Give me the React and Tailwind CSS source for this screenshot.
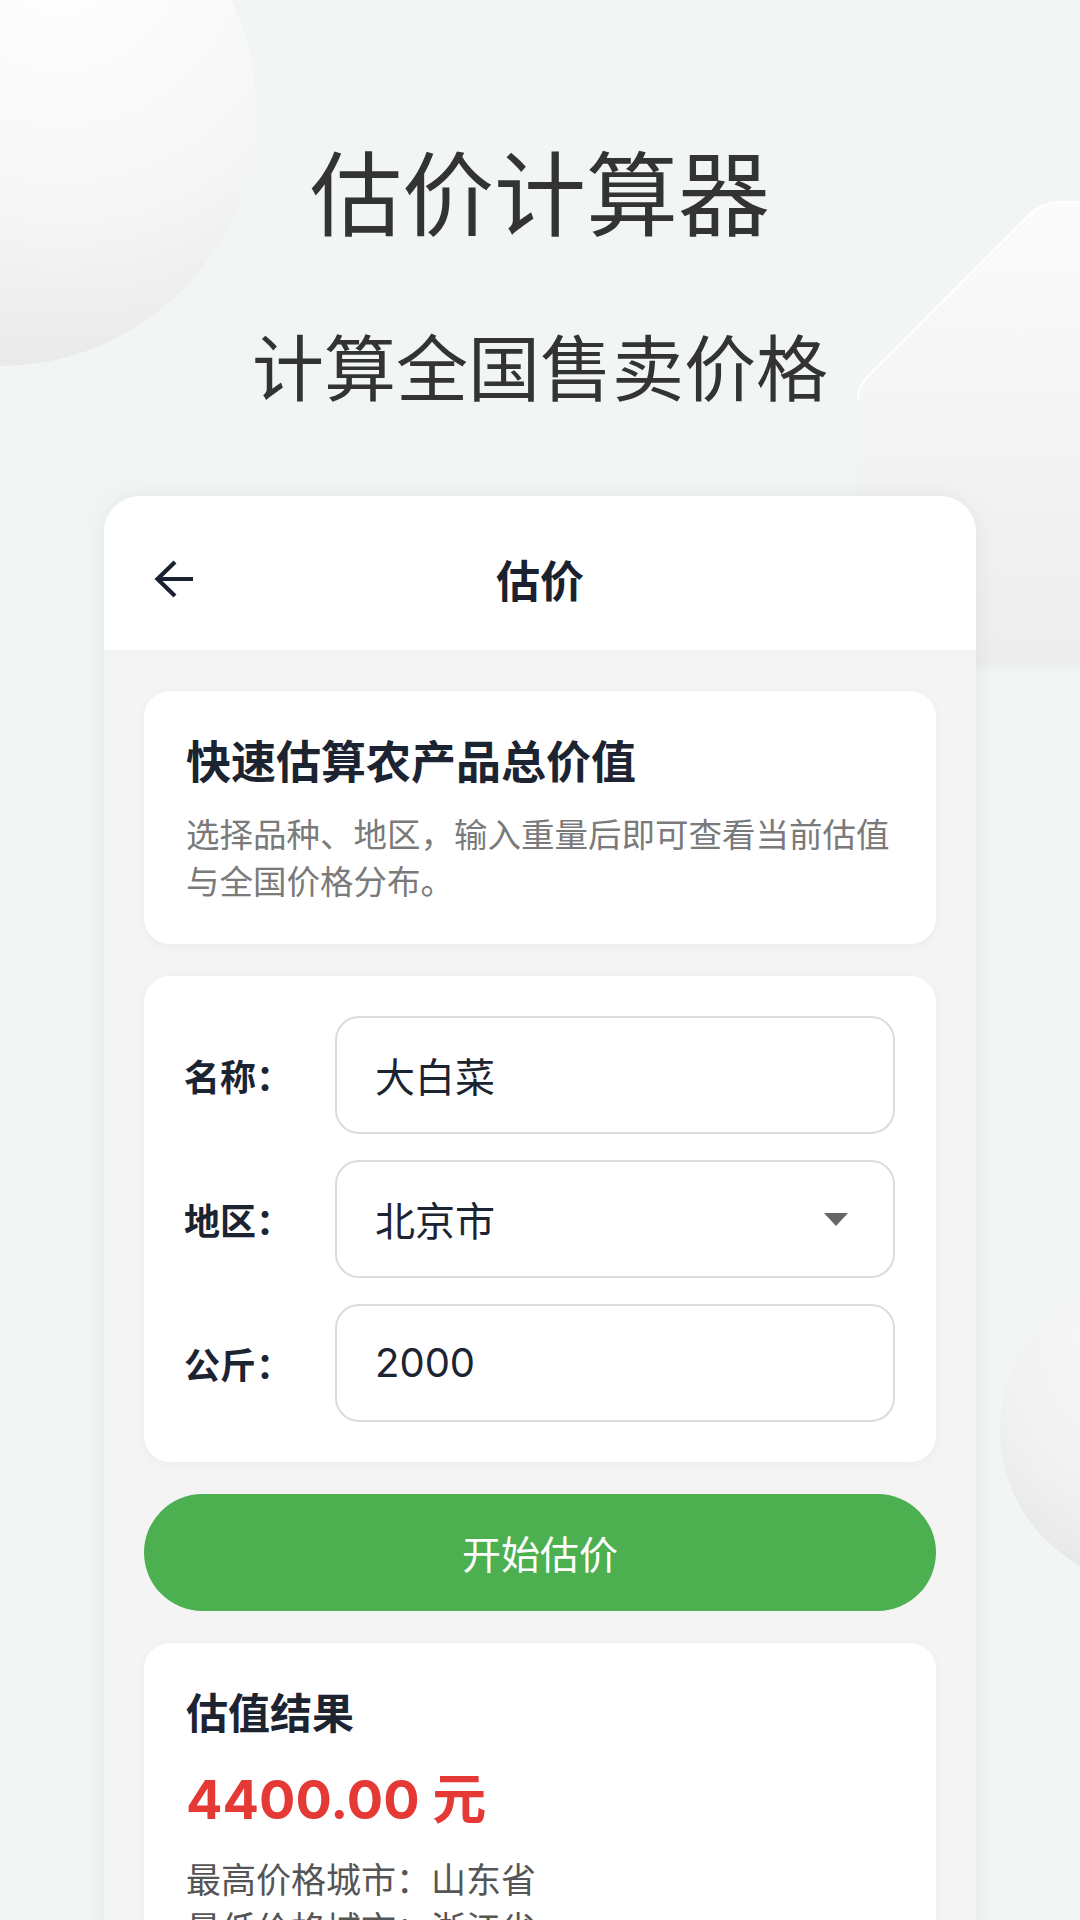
import React from "react";

function Decor() {
  return (
    <svg
      className="absolute inset-0 pointer-events-none"
      width="1080"
      height="1920"
      viewBox="0 0 1080 1920"
    >
      <defs>
        <radialGradient id="sph1" cx="0.62" cy="0.18" r="0.95">
          <stop offset="0" stopColor="#ffffff" />
          <stop offset="0.55" stopColor="#f6f6f6" />
          <stop offset="1" stopColor="#e4e4e4" />
        </radialGradient>
        <radialGradient id="sph2" cx="0.55" cy="0.2" r="0.95">
          <stop offset="0" stopColor="#fafafa" />
          <stop offset="0.6" stopColor="#f1f1f1" />
          <stop offset="1" stopColor="#e2e2e2" />
        </radialGradient>
        <linearGradient id="plat" x1="0" y1="0" x2="0" y2="1">
          <stop offset="0" stopColor="#fbfbfb" />
          <stop offset="1" stopColor="#ededed" />
        </linearGradient>
        <linearGradient id="floor" x1="0" y1="0" x2="0" y2="1">
          <stop offset="0" stopColor="#e9eded" />
          <stop offset="1" stopColor="#f1f5f4" />
        </linearGradient>
      </defs>
      <circle cx="0" cy="110" r="256" fill="url(#sph1)" />
      <path
        d="M858 661 L858 400 Q858 386 868 376 L1030 214 Q1042 203 1060 202 L1080 202 L1080 661 Z"
        fill="url(#plat)"
      />
      <path
        d="M858 400 Q858 386 868 376 L1030 214 Q1042 203 1060 202 L1080 202"
        fill="none"
        stroke="#ffffff"
        strokeWidth="2"
      />
      <rect x="858" y="661" width="222" height="14" fill="url(#floor)" />
      <circle cx="1155" cy="1430" r="155" fill="url(#sph2)" />
    </svg>
  );
}

function BackArrow() {
  return (
    <svg width="40" height="38" viewBox="0 0 40 38" fill="none">
      <path
        d="M21 2 L3.5 19 L21 36 M3.5 19 H39"
        stroke="#1a2230"
        strokeWidth="4.2"
        strokeLinejoin="miter"
      />
    </svg>
  );
}

function Row({ label, children }) {
  return (
    <div className="flex items-center h-[118px]">
      <div className="w-[151px] shrink-0 text-[36px] font-bold text-[#1c2331] leading-none">
        {label}
      </div>
      <div className="flex-1 h-full rounded-[24px] border-2 border-[#dcdcdc] bg-white flex items-center justify-between pl-[38px] pr-[45px]">
        {children}
      </div>
    </div>
  );
}

export default function App() {
  return (
    <div className="relative w-[1080px] h-[1920px] overflow-hidden bg-[#f1f5f4] font-['Noto_Sans_CJK_SC','Noto_Sans',sans-serif]">
      <Decor />
      <div className="relative flex flex-col items-center">
        <div className="pt-[143px] text-[92px] leading-none text-[#333333] font-normal">
          估价计算器
        </div>
        <div className="mt-[93px] text-[72px] leading-none text-[#333333] font-normal">
          计算全国售卖价格
        </div>

        <div className="mt-[96px] w-[872px] h-[1500px] rounded-[36px] overflow-hidden bg-[#f4f4f4] shadow-[0_0_24px_rgba(0,0,0,0.06)]">
          <div className="h-[154px] bg-white pt-[12px] grid grid-cols-[1fr_auto_1fr] items-center">
            <div className="pl-[50px] flex items-center">
              <BackArrow />
            </div>
            <div className="text-[44px] font-bold text-[#1a2230] leading-none">
              估价
            </div>
            <div />
          </div>

          <div className="px-[40px] pt-[41px] flex flex-col gap-[32px]">
            <div className="bg-white rounded-[26px] pl-[42px] pr-[30px] pt-[41px] pb-[41px] shadow-[0_2px_10px_rgba(0,0,0,0.04)]">
              <div className="text-[45px] leading-[56px] font-bold text-[#1c2331]">
                快速估算农产品总价值
              </div>
              <div className="mt-[21px] text-[33.5px] leading-[47px] text-[#7a7a7a] whitespace-nowrap">
                选择品种、地区，输入重量后即可查看当前估值
                <br />
                与全国价格分布。
              </div>
            </div>

            <div className="bg-white rounded-[26px] pl-[40px] pr-[41px] py-[40px] flex flex-col gap-[26px] shadow-[0_2px_10px_rgba(0,0,0,0.04)]">
              <Row label="名称：">
                <span className="text-[40px] text-[#1c2331] leading-none">大白菜</span>
              </Row>
              <Row label="地区：">
                <span className="text-[40px] text-[#1c2331] leading-none">北京市</span>
                <svg width="24" height="13" viewBox="0 0 24 13">
                  <polygon points="0,0 24,0 12,13" fill="#666666" />
                </svg>
              </Row>
              <Row label="公斤：">
                <span className="text-[40px] text-[#1c2331] leading-none font-['Inter',sans-serif]">
                  2000
                </span>
              </Row>
            </div>

            <div className="h-[117px] rounded-full bg-[#4caf50] flex items-center justify-center text-white text-[39px] leading-none">
              开始估价
            </div>

            <div className="bg-white rounded-[26px] pl-[42px] pt-[40px] pb-[60px] shadow-[0_2px_10px_rgba(0,0,0,0.04)]">
              <div className="text-[42px] leading-[56px] font-bold text-[#1c2331]">
                估值结果
              </div>
              <div className="mt-[25px] text-[54px] leading-[72px] font-bold text-[#e53935] font-['Inter','Noto_Sans_CJK_SC',sans-serif]">
                4400.00 元
              </div>
              <div className="mt-[17px] text-[35px] leading-[49px] text-[#555555]">
                <div>最高价格城市：山东省</div>
                <div>最低价格城市：浙江省</div>
                <div>全国平均价格：2.20 元/公斤</div>
              </div>
            </div>
          </div>
        </div>
      </div>
    </div>
  );
}
